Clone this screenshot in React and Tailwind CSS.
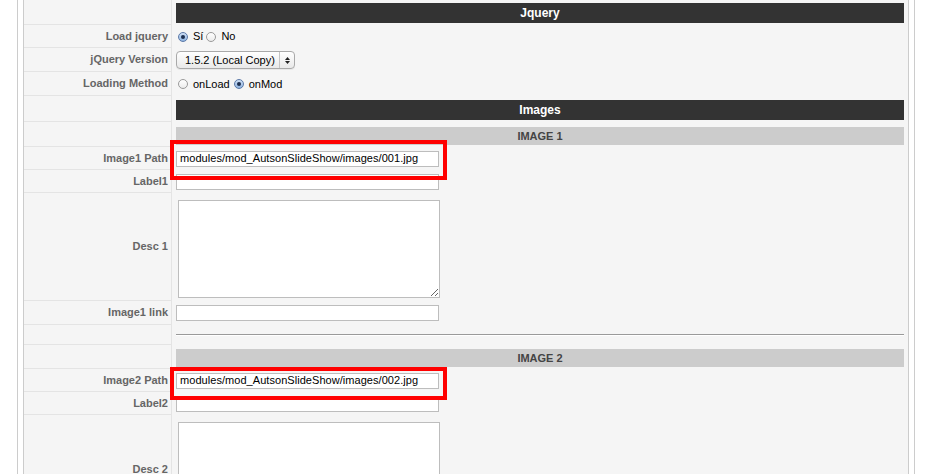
import React from 'react';

const font = { fontFamily: '"Liberation Sans", Arial, sans-serif' };

const Radio = ({ checked }) =>
  checked ? (
    <span className="inline-flex items-center justify-center w-[10px] h-[10px] rounded-full border border-[#5b79a8] bg-gradient-to-b from-[#cfe0f5] to-[#8fb3e0]">
      <span className="w-[4px] h-[4px] rounded-full bg-[#1d2f4f]" />
    </span>
  ) : (
    <span className="inline-block w-[10px] h-[10px] rounded-full border border-[#9a9a9a] bg-gradient-to-b from-white to-[#ececec]" />
  );

const Row = ({ label, h, children, pt }) => (
  <div className="flex" style={{ height: h }}>
    <div className="w-[148px] shrink-0 border-b border-r border-[#e4e4e4] flex items-center justify-end pr-[3px] text-[11px] font-bold text-[#666]">
      {label}
    </div>
    <div className={`flex-1 pl-[4px] pr-[4px] flex ${pt ? 'items-start' : 'items-center'}`} style={pt ? { paddingTop: pt } : undefined}>
      {children}
    </div>
  </div>
);

const Header = ({ children }) => (
  <div className="w-full h-[20px] bg-[#333] flex items-center justify-center text-white text-[12px] font-bold">
    {children}
  </div>
);

const SubHeader = ({ children }) => (
  <div className="w-full h-[18px] bg-[#cccccc] flex items-center justify-center text-[#444] text-[11px] font-bold">
    {children}
  </div>
);

const Input = ({ value }) => (
  <input
    readOnly
    value={value}
    className="w-[263px] h-[16px] bg-white border border-[#bdbdbd] px-[3px] text-[11px] tracking-[0.05px] text-black outline-none"
    style={font}
  />
);

const Area = () => (
  <textarea readOnly className="ml-[2px] w-[262px] h-[98px] bg-white border border-[#bdbdbd] outline-none" />
);

export default function App() {
  return (
    <div className="relative w-[929px] h-[474px] overflow-hidden bg-white" style={font}>
      <div className="ml-[17px] w-[898px] h-full border-l border-r border-[#cccccc] px-[5px]">
        <div className="h-full border-l border-r border-[#cccccc] bg-[#f5f5f5]">
          <Row label="" h={25} pt={3}>
            <Header>Jquery</Header>
          </Row>
          <Row label="Load jquery" h={23}>
            <div className="flex items-center text-[11px] text-black pl-[2px]">
              <Radio checked />
              <span className="ml-[5px] mr-[3px]">Sí</span>
              <Radio />
              <span className="ml-[5px]">No</span>
            </div>
          </Row>
          <Row label="jQuery Version" h={24}>
            <div className="flex items-center h-[18px] w-[119px] rounded-[4px] border border-[#a9a9a9] bg-gradient-to-b from-white to-[#e9e9e9] text-[11px] text-black shadow-[0_1px_0_rgba(0,0,0,0.05)]">
              <span className="flex-1 pl-[8px]">1.5.2 (Local Copy)</span>
              <span className="w-[15px] h-full border-l border-[#c4c4c4] flex flex-col items-center justify-center gap-[1px]">
                <svg width="5" height="3" viewBox="0 0 5 3"><path d="M0 3 L2.5 0 L5 3 Z" fill="#222" /></svg>
                <svg width="5" height="3" viewBox="0 0 5 3"><path d="M0 0 L2.5 3 L5 0 Z" fill="#222" /></svg>
              </span>
            </div>
          </Row>
          <Row label="Loading Method" h={24}>
            <div className="flex items-center text-[11px] text-black pl-[2px]">
              <Radio />
              <span className="ml-[5px] mr-[4px]">onLoad</span>
              <Radio checked />
              <span className="ml-[5px]">onMod</span>
            </div>
          </Row>
          <Row label="" h={26} pt={4}>
            <Header>Images</Header>
          </Row>
          <Row label="" h={25} pt={5}>
            <SubHeader>IMAGE 1</SubHeader>
          </Row>
          <Row label="Image1 Path" h={23}>
            <Input value="modules/mod_AutsonSlideShow/images/001.jpg" />
          </Row>
          <Row label="Label1" h={23}>
            <Input value="" />
          </Row>
          <Row label="Desc 1" h={108} pt={7}>
            <Area />
          </Row>
          <Row label="Image1 link" h={24}>
            <Input value="" />
          </Row>
          <Row label="" h={20}>
            <div className="w-full border-t border-[#9a9a9a] border-b border-b-white" />
          </Row>
          <Row label="" h={24} pt={4}>
            <SubHeader>IMAGE 2</SubHeader>
          </Row>
          <Row label="Image2 Path" h={23}>
            <Input value="modules/mod_AutsonSlideShow/images/002.jpg" />
          </Row>
          <Row label="Label2" h={23}>
            <Input value="" />
          </Row>
          <Row label="Desc 2" h={110} pt={7}>
            <Area />
          </Row>
        </div>
      </div>

      <div className="absolute left-[170px] top-[140px] w-[277px] h-[40px] border-4 border-[#ff0000]" />
      <div className="absolute left-[170px] top-[367px] w-[277px] h-[33px] border-4 border-[#ff0000]" />
    </div>
  );
}
